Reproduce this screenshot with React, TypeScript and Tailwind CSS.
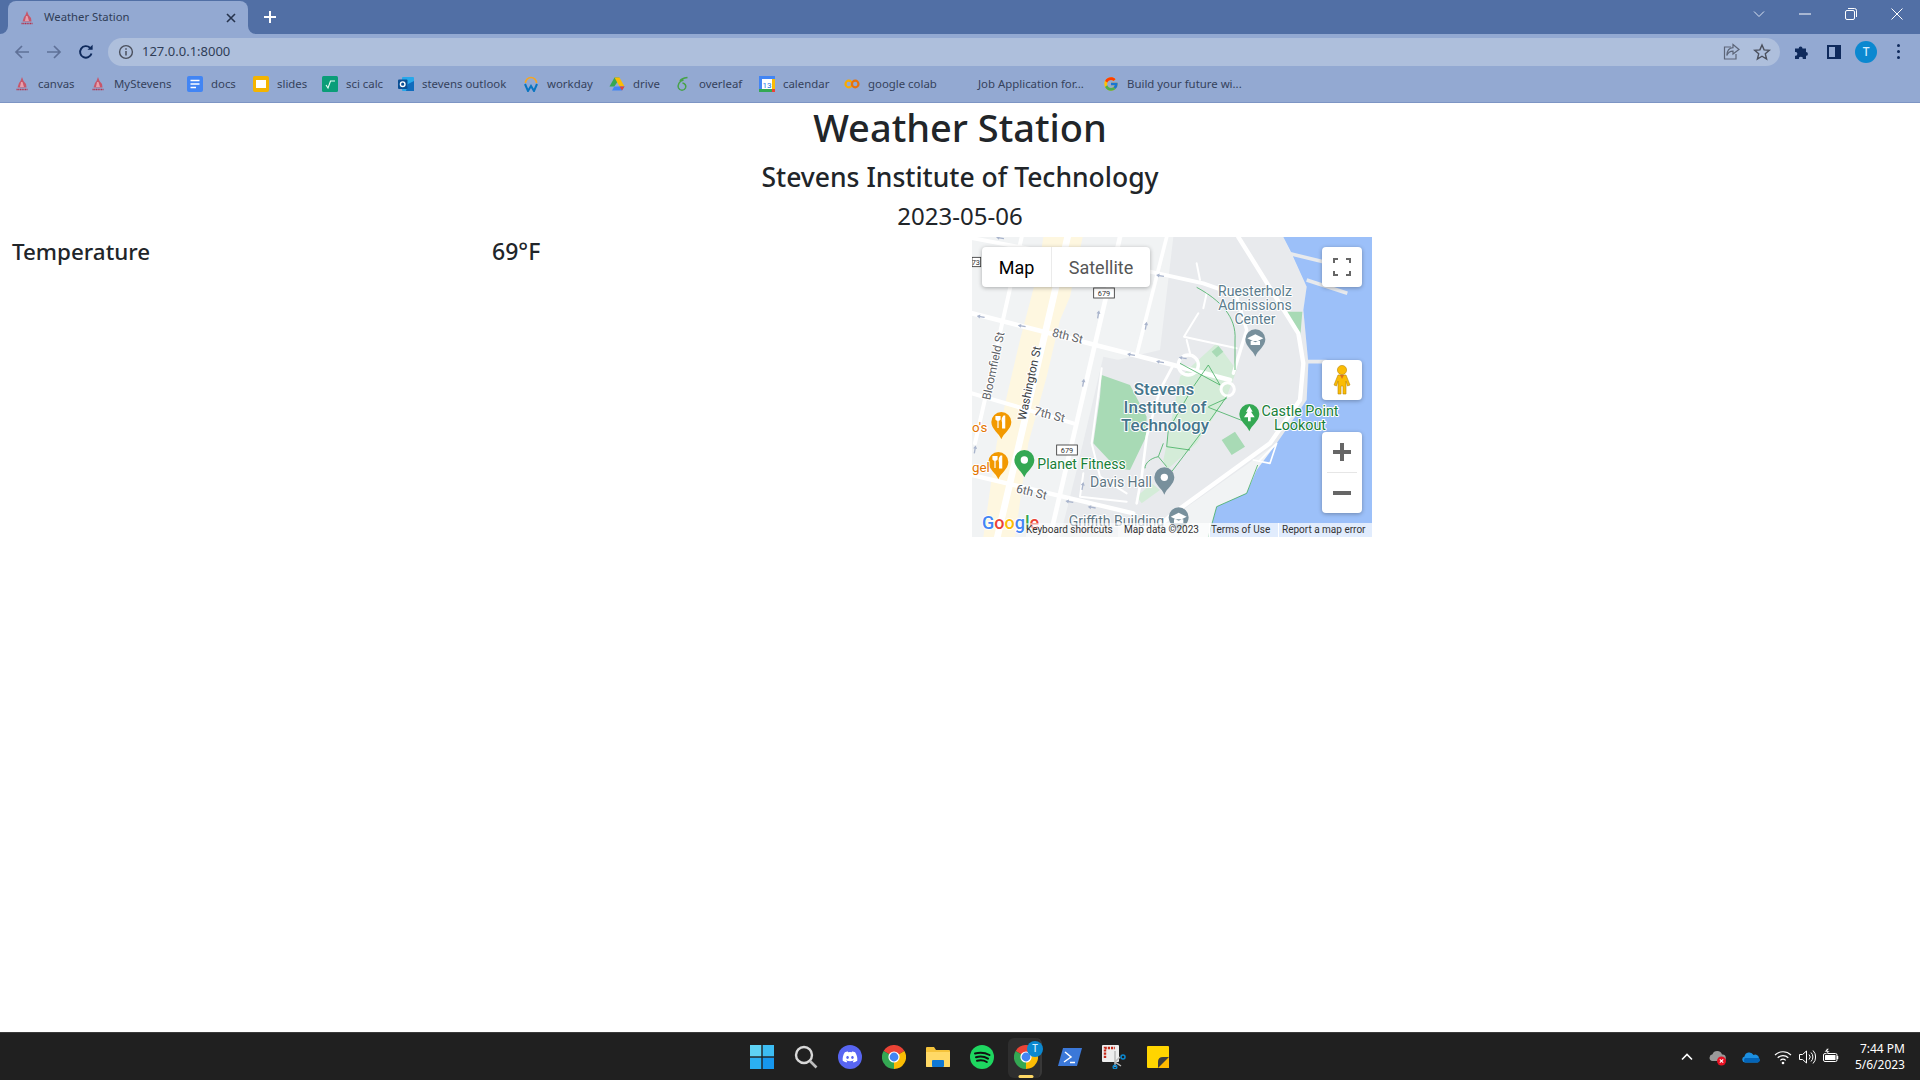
import React from 'react';
import { FaDiscord } from 'react-icons/fa';
import { FcGoogle } from 'react-icons/fc';

const Chrome = ({ s = 24 }: { s?: number }) => (
  <svg width={s} height={s} viewBox="0 0 24 24">
    <path d="M12 12 L1.6 6 A12 12 0 0 1 22.4 6 Z" fill="#ea4335" />
    <path d="M12 12 L22.4 6 A12 12 0 0 1 12 24 Z" fill="#fbbc04" />
    <path d="M12 12 L12 24 A12 12 0 0 1 1.6 6 Z" fill="#34a853" />
    <circle cx="12" cy="12" r="5.6" fill="#fff" />
    <circle cx="12" cy="12" r="4.4" fill="#4285f4" />
  </svg>
);

const Stevens = () => (
  <svg width="16" height="16" viewBox="0 0 16 16">
    <path d="M8 1 L9.5 5 L12 8 L12.5 11.5 L3.5 11.5 L5 7 L6.5 5 Z" fill="#c8566a" />
    <path d="M7 6 L8.5 6 L10 11 L6 11 Z" fill="#e8a0ad" />
    <path d="M2.5 13.5 H13.5" stroke="#b5304a" strokeWidth="1.6" strokeDasharray="1.2 .5" />
  </svg>
);

const Docs = () => (
  <svg width="16" height="16" viewBox="0 0 16 16">
    <rect width="16" height="16" rx="2" fill="#4285f4" />
    <path d="M3.5 4.5H12.5M3.5 8H12.5M3.5 11.5H9" stroke="#fff" strokeWidth="1.6" />
  </svg>
);
const Slides = () => (
  <svg width="16" height="16" viewBox="0 0 16 16">
    <rect width="16" height="16" rx="2" fill="#f4b400" />
    <rect x="3" y="4" width="10" height="8" fill="#fff" />
  </svg>
);
const SciCalc = () => (
  <svg width="16" height="16" viewBox="0 0 16 16">
    <rect width="16" height="16" rx="1.5" fill="#0b9d78" />
    <path d="M4 9 L6 12 L8.5 5 H13" stroke="#e8fff5" strokeWidth="1.1" fill="none" />
  </svg>
);
const Outlook = () => (
  <svg width="16" height="16" viewBox="0 0 16 16">
    <rect x="4" y="1" width="12" height="14" rx="1" fill="#28a8ea" />
    <path d="M10 8 L16 5 V15 H8 Z" fill="#0f6cbd" />
    <rect x="0" y="3.5" width="9.5" height="9.5" rx="1" fill="#0a4f94" />
    <circle cx="4.7" cy="8.2" r="2.3" fill="none" stroke="#fff" strokeWidth="1.4" />
  </svg>
);
const Workday = () => (
  <svg width="16" height="16" viewBox="0 0 16 16">
    <path d="M2.5 7 A5.5 5.5 0 0 1 13.5 7" stroke="#f5a623" strokeWidth="1.6" fill="none" />
    <path d="M2 8 L5 15 L8 10 L11 15 L14 8" stroke="#0875c1" strokeWidth="2" fill="none" />
  </svg>
);
const Drive = () => (
  <svg width="16" height="16" viewBox="0 0 16 16">
    <path d="M5.5 1.5 H10.5 L8 6.5 L5.3 10.5 H0.5 Z" fill="#34a853" />
    <path d="M10.5 1.5 L15.5 10.5 H10.5 L5.5 1.5 Z" fill="#fbbc04" />
    <path d="M3 14.5 L5.3 10.5 H15.5 L13 14.5 Z" fill="#4285f4" />
    <path d="M10.5 10.5H15.5L13 14.5Z" fill="#ea4335" />
  </svg>
);
const Overleaf = () => (
  <svg width="16" height="16" viewBox="0 0 16 16">
    <path d="M12.5 1.5 C9 2 6 2.5 5 5 M8.5 4 C4 5 2.5 9 3.5 12 C5 15 9 15 10.5 12 C11.5 9.5 10 7.5 7.5 7" stroke="#46a247" strokeWidth="1.5" fill="none" />
  </svg>
);
const Calendar = () => (
  <svg width="16" height="16" viewBox="0 0 16 16">
    <rect width="16" height="16" fill="#fff" />
    <rect width="16" height="3" fill="#4285f4" />
    <rect width="3" height="16" fill="#4285f4" />
    <rect x="13" y="3" width="3" height="10" fill="#fbbc04" />
    <rect y="13" width="13" height="3" fill="#34a853" />
    <rect x="13" y="13" width="3" height="3" fill="#ea4335" />
    <text x="8" y="11.5" textAnchor="middle" fontSize="8" fontFamily="Roboto, sans-serif" fill="#1a73e8">13</text>
  </svg>
);
const Colab = () => (
  <svg width="16" height="16" viewBox="0 0 16 16">
    <circle cx="4.8" cy="8" r="3.3" fill="none" stroke="#f9ab00" strokeWidth="2.2" />
    <circle cx="11.2" cy="8" r="3.3" fill="none" stroke="#e8710a" strokeWidth="2.2" />
  </svg>
);

const bookmarks: { icon: React.ReactNode; label: string; w: string }[] = [
  { icon: <Stevens />, label: 'canvas', w: 'w-[36px]' },
  { icon: <Stevens />, label: 'MyStevens', w: 'w-[57px]' },
  { icon: <Docs />, label: 'docs', w: 'w-[26px]' },
  { icon: <Slides />, label: 'slides', w: 'w-[29px]' },
  { icon: <SciCalc />, label: 'sci calc', w: 'w-[36px]' },
  { icon: <Outlook />, label: 'stevens outlook', w: 'w-[85px]' },
  { icon: <Workday />, label: 'workday', w: 'w-[46px]' },
  { icon: <Drive />, label: 'drive', w: 'w-[26px]' },
  { icon: <Overleaf />, label: 'overleaf', w: 'w-[44px]' },
  { icon: <Calendar />, label: 'calendar', w: 'w-[45px]' },
  { icon: <Colab />, label: 'google colab', w: 'w-[70px]' },
  { icon: <span className="block w-4 h-4" />, label: 'Job Application for...', w: 'w-[109px]' },
  { icon: <FcGoogle size={16} />, label: 'Build your future wi...', w: 'w-[113px]' },
];

const TitleBar = () => (
  <div className="flex items-end h-[34px] bg-[#516fa5]">
    <div className="relative ml-2 w-[240px] h-[33px] flex items-center bg-[#93a9d2] rounded-t-lg pl-[11px] pr-[9px]">
      <svg className="absolute -left-2 bottom-0" width="8" height="8" viewBox="0 0 8 8"><path d="M8 0 V8 H0 A8 8 0 0 0 8 0 Z" fill="#93a9d2" /></svg>
      <svg className="absolute -right-2 bottom-0" width="8" height="8" viewBox="0 0 8 8"><path d="M0 0 V8 H8 A8 8 0 0 1 0 0 Z" fill="#93a9d2" /></svg>
      <Stevens />
      <span className="ml-[9px] text-[11.3px] text-[#2f3d57] whitespace-nowrap">Weather Station</span>
      <svg className="ml-auto" width="16" height="16" viewBox="0 0 16 16"><path d="M4 4L12 12M12 4L4 12" stroke="#26334d" strokeWidth="1.6" /></svg>
    </div>
    <div className="ml-[10px] w-6 h-[34px] flex items-center justify-center">
      <svg width="16" height="16" viewBox="0 0 16 16"><path d="M8 2V14M2 8H14" stroke="#fff" strokeWidth="2" /></svg>
    </div>
    <div className="ml-auto flex h-[34px] items-center -translate-y-[3px]">
      <div className="w-[46px] flex justify-center"><svg width="12" height="8" viewBox="0 0 12 8"><path d="M1 1.5L6 6.5L11 1.5" stroke="#dbe3f1" fill="none" /></svg></div>
      <div className="w-[46px] flex justify-center"><svg width="12" height="2" viewBox="0 0 12 2"><path d="M0 1H12" stroke="#fff" /></svg></div>
      <div className="w-[46px] flex justify-center"><svg width="12" height="12" viewBox="0 0 12 12"><rect x=".5" y="2.5" width="9" height="9" rx="1.5" stroke="#fff" fill="none" /><path d="M3 .5H9.5A2 2 0 0 1 11.5 2.5V9" stroke="#fff" fill="none" /></svg></div>
      <div className="w-[46px] flex justify-center"><svg width="12" height="12" viewBox="0 0 12 12"><path d="M.5 .5L11.5 11.5M11.5 .5L.5 11.5" stroke="#fff" /></svg></div>
    </div>
  </div>
);

const Toolbar = () => (
  <div className="flex items-center h-[35px] bg-[#93a9d2]">
    <div className="flex gap-2 pl-[10px]">
      <div className="w-6 h-6 flex items-center justify-center"><svg width="16" height="16" viewBox="0 0 16 16"><path d="M15 8H2M8 2L2 8L8 14" stroke="#5f7198" strokeWidth="1.7" fill="none" /></svg></div>
      <div className="w-6 h-6 flex items-center justify-center"><svg width="16" height="16" viewBox="0 0 16 16"><path d="M1 8H14M8 2L14 8L8 14" stroke="#5f7198" strokeWidth="1.7" fill="none" /></svg></div>
      <div className="w-6 h-6 flex items-center justify-center"><svg width="16" height="16" viewBox="0 0 16 16"><path d="M13.5 9.5A5.8 5.8 0 1 1 12 3.8" stroke="#0f2a5c" strokeWidth="1.9" fill="none" /><path d="M9.5 5.8H14.6V.7Z" fill="#0f2a5c" /></svg></div>
    </div>
    <div className="ml-[10px] flex-1 h-[28px] rounded-full bg-[#aebfdc] flex items-center pl-[10px] pr-[9px]">
      <svg width="16" height="16" viewBox="0 0 16 16"><circle cx="8" cy="8" r="6.4" stroke="#4a4f5c" strokeWidth="1.4" fill="none" /><path d="M8 7V11.5M8 4.3V5.8" stroke="#4a4f5c" strokeWidth="1.5" /></svg>
      <span className="ml-2 text-[13px] text-[#2f3d57] whitespace-nowrap">127.0.0.1:8000</span>
      <svg className="ml-auto" width="18" height="18" viewBox="0 0 18 18"><path d="M9 4H2.5V16H14V11" stroke="#5c6578" strokeWidth="1.2" fill="none" /><path d="M11 1.5L17 6.5L11 11V8.2C8 8.2 6 9.5 4.8 12.5C5 8 7 4.9 11 4.6Z" stroke="#5c6578" strokeWidth="1.2" fill="none" /></svg>
      <svg className="ml-[13px]" width="18" height="18" viewBox="0 0 18 18"><path d="M9 2L11.1 6.9L16.3 7.3L12.3 10.8L13.6 16L9 13.2L4.4 16L5.7 10.8L1.7 7.3L6.9 6.9Z" stroke="#4a4f5c" strokeWidth="1.4" fill="none" /></svg>
    </div>
    <div className="flex gap-2 ml-[10px] pr-[10px]">
      <div className="w-6 h-6 flex items-center justify-center"><svg width="16" height="16" viewBox="0 0 16 16"><path d="M1 4.5H4.7A1.9 1.9 0 1 1 8.5 4.5H12V8A1.9 1.9 0 1 1 12 11.8V15H8.7A1.9 1.9 0 1 0 5 15H1V11.7A1.9 1.9 0 1 0 1 8Z" fill="#0f2a5c" /></svg></div>
      <div className="w-6 h-6 flex items-center justify-center"><svg width="14" height="14" viewBox="0 0 14 14"><rect x="1" y="1" width="12" height="12" stroke="#0f2a5c" strokeWidth="2" fill="none" /><rect x="8" y="1" width="5" height="12" fill="#0f2a5c" /></svg></div>
      <div className="w-6 h-6 flex items-center justify-center"><span className="w-[22px] h-[22px] rounded-full bg-[#0b88d0] flex items-center justify-center text-[12px] font-medium text-[#d6eeff]">T</span></div>
      <div className="w-6 h-6 flex flex-col items-center justify-center gap-[3px]">
        <span className="w-[3px] h-[3px] rounded-full bg-[#0f2a5c]" />
        <span className="w-[3px] h-[3px] rounded-full bg-[#0f2a5c]" />
        <span className="w-[3px] h-[3px] rounded-full bg-[#0f2a5c]" />
      </div>
    </div>
  </div>
);

const BookmarkBar = () => (
  <div className="flex items-center gap-4 h-[34px] pl-[14px] pb-[3px] bg-[#93a9d2] border-b border-[#7d95c4]">
    {bookmarks.map((b, i) => (
      <div key={i} className="flex items-center gap-2">
        {b.icon}
        <span className={`${b.w} text-[11.4px] leading-none text-[#35425c] whitespace-nowrap`}>{b.label}</span>
      </div>
    ))}
  </div>
);

const pin = (cx: number, cy: number) =>
  `M${cx} ${cy + 52} C${cx - 6} ${cy + 34} ${cx - 30} ${cy + 22} ${cx - 30} ${cy} A30 30 0 1 1 ${cx + 30} ${cy} C${cx + 30} ${cy + 22} ${cx + 6} ${cy + 34} ${cx} ${cy + 52}Z`;

const arrow = (x: number, y: number, a: number, k: number) => (
  <path key={k} transform={`translate(${x} ${y}) rotate(${a})`} d="M-12 0 L-2 -6 V-2 H12 V2 H-2 V6Z" fill="#a9b4cc" />
);

const Label = ({ x, y, size, fill, weight = 400, rot, children, anchor = 'middle' }: { x: number; y: number; size: number; fill: string; weight?: number; rot?: number; children: React.ReactNode; anchor?: 'middle' | 'start' }) => (
  <text
    x={x}
    y={y}
    fontSize={size}
    fill={fill}
    fontWeight={weight}
    textAnchor={anchor}
    fontFamily="Roboto, sans-serif"
    stroke="#fff"
    strokeWidth="6"
    paintOrder="stroke"
    strokeLinejoin="round"
    transform={rot !== undefined ? `rotate(${rot} ${x} ${y})` : undefined}
  >
    {children}
  </text>
);

const Shield = ({ x, y }: { x: number; y: number }) => (
  <g>
    <rect x={x} y={y} width="62" height="30" fill="#fff" stroke="#333" strokeWidth="2.5" />
    <text x={x + 31} y={y + 23} textAnchor="middle" fontSize="22" fontFamily="Roboto, sans-serif" fill="#333">679</text>
  </g>
);

const MapArt = () => (
  <svg className="block" width="400" height="300" viewBox="36 21 1200 900">
    <rect x="36" y="21" width="1200" height="900" fill="#f1f3f4" />
    <path d="M640 21 H970 L1040 170 L1030 240 L1045 400 L1040 510 L950 640 L640 860 L500 921 H300 L430 400 L600 360 Z" fill="#e8eaed" />
    <path d="M430 380 L620 420 L540 720 L350 720 Z" fill="#e8eaed" />
    <path d="M250 21 H368 L330 200 L300 270 L260 440 L205 640 L165 921 H70 L110 640 L140 500 L180 330 L235 120Z" fill="#fef7e0" />
    <path d="M970 21 L990 60 L1040 170 L1030 240 L1045 400 L1040 510 L950 640 L890 720 L860 790 L770 830 L745 921 H1236 V21Z" fill="#9cc0f9" />
    <path d="M985 70L1130 105M1040 150L1162 190M1040 395H1100" stroke="#e8eaed" strokeWidth="11" />
    <path d="M425 435 L510 465 L560 560 L558 620 L510 720 L470 715 L400 640 L420 500Z" fill="#a8dab5" />
    <path d="M770 340 L830 420 L800 500 L710 640 L620 720 L610 690 L625 620 L660 440Z" fill="#d4ecd8" />
    <path d="M575 760 L600 780 L545 820 L530 800Z" fill="#d4ecd8" />
    <path d="M785 630 L825 605 L855 650 L815 675Z M975 245 L1027 245 L1020 330Z M755 365 L775 348 L790 365 L770 382Z" fill="#a8dab5" />
    <g stroke="#fff" fill="none" strokeLinecap="round" strokeLinejoin="round">
      <path d="M330 -10 L110 930" strokeWidth="20" />
      <path d="M185 21 L45 640" strokeWidth="12" />
      <path d="M480 21 L270 921" strokeWidth="14" />
      <path d="M620 21 L530 375" strokeWidth="11" />
      <path d="M36 250 L640 405 L810 450" strokeWidth="14" />
      <path d="M40 25 L570 125 L730 160 L815 190" strokeWidth="12" />
      <path d="M36 490 L340 580" strokeWidth="12" />
      <path d="M36 735 L520 850" strokeWidth="13" />
      <path d="M835 21 L1015 310 L1030 400 L1020 510 L930 640 L640 850 L560 921" strokeWidth="13" />
      <path d="M830 200 L860 300 L820 430" strokeWidth="10" />
      <path d="M710 100 L720 150 M740 190 L730 235 M715 250 L672 320 L830 355 M680 330 L690 370" strokeWidth="6" />
      <path d="M640 405 L600 480 L560 620 L545 740 L530 820" strokeWidth="8" />
      <path d="M425 415 L395 640 L420 740 L500 790 M370 730 L360 800 L500 815" strokeWidth="6" />
      <path d="M900 690 L950 640 L930 700 L880 690" strokeWidth="5" />
      <circle cx="685" cy="405" r="30" strokeWidth="10" />
      <circle cx="803" cy="478" r="20" strokeWidth="9" />
    </g>
    <g stroke="#34a853" strokeWidth="2.2" fill="none">
      <path d="M710 172 C780 210 830 260 825 330 L825 420" />
      <path d="M745 405 L700 470 L625 600 L620 650 L690 660 M660 400 L780 465 M745 405 L780 465 M800 500 L715 620 L635 725 M800 505 L745 530 M745 532 L855 575 M595 680 L620 710 M610 640 L595 680 C570 685 555 700 555 715" />
      <path d="M893 705 L860 790 L770 830 L745 921" />
    </g>
    {[[62, 260, 10], [185, 288, 10], [513, 374, 10], [600, 396, 10], [668, 384, 10], [120, 24, 10], [600, 137, 10], [45, 658, 100], [370, 458, 100], [558, 287, 100], [415, 253, 100], [368, 768, 100], [328, 815, 10], [395, 832, 10]].map((a, i) => arrow(a[0], a[1], a[2], i))}
    <rect x="36" y="82" width="26" height="28" fill="#fff" stroke="#333" strokeWidth="2.5" />
    <text x="60" y="106" textAnchor="end" fontSize="22" fontFamily="Roboto, sans-serif" fill="#333">73</text>
    <Shield x={401} y={174} />
    <Shield x={290} y={645} />
    <Label x={320} y={330} size={36} fill="#5f6368" rot={14}>8th St</Label>
    <Label x={266} y={566} size={36} fill="#5f6368" rot={14}>7th St</Label>
    <Label x={212} y={798} size={36} fill="#5f6368" rot={14}>6th St</Label>
    <Label x={112} y={410} size={35} fill="#5f6368" rot={-78}>Bloomfield St</Label>
    <Label x={220} y={462} size={35} fill="#3c4043" rot={-78}>Washington St</Label>
    <path d={pin(886, 328)} fill="#78909c" />
    <path d="M886 313 L910 325 L886 337 L862 325Z M872 333 V345 H900 V333" fill="#fff" />
    <path d={pin(124, 576)} fill="#f29900" />
    <path d="M114 558 V578 M108 558 V568 Q114 574 120 568 V558 M114 578 V594 M132 558 Q124 566 128 578 V594 H134 V558Z" stroke="#fff" strokeWidth="3.5" fill="#fff" />
    <path d={pin(115, 696)} fill="#f29900" />
    <path d="M105 678 V698 M99 678 V688 Q105 694 111 688 V678 M105 698 V714 M123 678 Q115 686 119 698 V714 H125 V678Z" stroke="#fff" strokeWidth="3.5" fill="#fff" />
    <path d={pin(193, 690)} fill="#34a853" />
    <circle cx="193" cy="690" r="11" fill="#fff" />
    <path d={pin(613, 742)} fill="#78909c" />
    <circle cx="613" cy="742" r="11" fill="#fff" />
    <path d={pin(868, 552)} fill="#34a853" />
    <path d="M868 528 L878 545 H873 L884 562 H872 V574 H864 V562 H852 L863 545 H858Z" fill="#fff" />
    <path d={pin(656, 862)} fill="#78909c" />
    <path d="M656 848 L680 860 L656 872 L632 860Z M642 868 V880 H670 V868" fill="#fff" />
    <Label x={885} y={197} size={42} fill="#5b7c8d">Ruesterholz</Label>
    <Label x={885} y={239} size={42} fill="#5b7c8d">Admissions</Label>
    <Label x={885} y={281} size={42} fill="#5b7c8d">Center</Label>
    <Label x={612} y={494} size={51} fill="#45758c" weight={500}>Stevens</Label>
    <Label x={615} y={548} size={51} fill="#45758c" weight={500}>Institute of</Label>
    <Label x={615} y={603} size={51} fill="#45758c" weight={500}>Technology</Label>
    <Label x={1020} y={558} size={43} fill="#188038">Castle Point</Label>
    <Label x={1020} y={600} size={43} fill="#188038">Lookout</Label>
    <Label x={232} y={716} size={42} fill="#188038" anchor="start">Planet Fitness</Label>
    <Label x={390} y={770} size={42} fill="#5f7785" anchor="start">Davis Hall</Label>
    <Label x={326} y={888} size={42} fill="#5f7785" anchor="start">Griffith Building</Label>
    <Label x={36} y={605} size={40} fill="#e37400" anchor="start">o's</Label>
    <Label x={36} y={726} size={40} fill="#e37400" anchor="start">gel</Label>
    <text x="66" y="896" fontSize="54" fontFamily="Roboto, sans-serif" fontWeight="500" stroke="#fff" strokeWidth="5" paintOrder="stroke">
      <tspan fill="#4285f4">G</tspan><tspan fill="#ea4335">o</tspan><tspan fill="#fbbc04">o</tspan><tspan fill="#4285f4">g</tspan><tspan fill="#34a853">l</tspan><tspan fill="#ea4335">e</tspan>
    </text>
  </svg>
);

const GoogleMap = () => (
  <div className="relative w-[400px] h-[300px] overflow-hidden font-['Roboto',sans-serif]">
    <MapArt />
    <div className="absolute left-[10px] top-[10px] flex h-10 bg-white shadow-[0_1px_4px_rgba(0,0,0,0.3)] rounded-sm text-[18px]">
      <span className="w-[70px] flex items-center justify-center text-black border-r border-[#ebebeb]">Map</span>
      <span className="w-[98px] flex items-center justify-center text-[#565656]">Satellite</span>
    </div>
    <div className="absolute right-[10px] top-[10px] w-10 h-10 bg-white shadow-[0_1px_4px_rgba(0,0,0,0.3)] rounded-sm flex items-center justify-center">
      <svg width="18" height="18" viewBox="0 0 18 18"><path d="M1 5V1H5M13 1H17V5M17 13V17H13M5 17H1V13" stroke="#666" strokeWidth="2" fill="none" /></svg>
    </div>
    <div className="absolute right-[10px] top-[123px] w-10 h-10 bg-white shadow-[0_1px_4px_rgba(0,0,0,0.3)] rounded-sm flex items-center justify-center">
      <svg width="18" height="30" viewBox="0 0 18 30">
        <circle cx="9" cy="5" r="4.6" fill="#fbbc04" stroke="#b8860b" strokeWidth=".6" />
        <path d="M5 10 H13 L17 20 L14.5 21 L13 16 V29 H10 V21 H8 V29 H5 V16 L3.5 21 L1 20Z" fill="#fbbc04" stroke="#b8860b" strokeWidth=".6" />
        <path d="M7 10 L9 14 L11 10Z" fill="#d9701e" />
      </svg>
    </div>
    <div className="absolute right-[10px] top-[195px] w-10 h-[81px] bg-white shadow-[0_1px_4px_rgba(0,0,0,0.3)] rounded-sm flex flex-col items-center">
      <div className="h-10 flex items-center justify-center">
        <svg width="18" height="18" viewBox="0 0 18 18"><path d="M9 0V18M0 9H18" stroke="#666" strokeWidth="4" /></svg>
      </div>
      <div className="w-[30px] h-px bg-[#e6e6e6]" />
      <div className="h-10 flex items-center justify-center">
        <svg width="18" height="18" viewBox="0 0 18 18"><path d="M0 9H18" stroke="#666" strokeWidth="4" /></svg>
      </div>
    </div>
    <div className="absolute left-[54px] right-0 bottom-0 h-[14px] flex items-center text-[10px] leading-none text-[#333] whitespace-nowrap">
      <span className="w-[92px] h-full flex items-center bg-white/50">Keyboard shortcuts</span>
      <span className="w-[91px] h-full flex items-center pl-[6px] bg-white/70">Map data ©2023</span>
      <span className="w-[69px] h-full flex items-center pl-[1px] bg-white/70 border-l border-white">Terms of Use</span>
      <span className="flex-1 h-full flex items-center pl-[3px] bg-white/70 border-l border-white">Report a map error</span>
    </div>
  </div>
);

const Dot = () => <span className="absolute left-1/2 -translate-x-1/2 top-[39px] w-[6px] h-[3px] rounded-sm bg-[#8a8a8a]" />;

const Task = ({ children, dot }: { children: React.ReactNode; dot?: boolean }) => (
  <div className="relative w-6 h-6 flex items-center justify-center">
    {children}
    {dot && <Dot />}
  </div>
);

const Taskbar = () => (
  <div className="flex items-center h-[48px] bg-[#202020] border-t border-[#3a3a3a] text-white">
    <div className="flex-1" />
    <div className="flex items-center gap-5">
      <Task>
        <svg width="24" height="24" viewBox="0 0 24 24">
          <rect x="0" y="0" width="11.3" height="11.3" fill="#5fd3f5" />
          <rect x="12.7" y="0" width="11.3" height="11.3" fill="#3cbdf3" />
          <rect x="0" y="12.7" width="11.3" height="11.3" fill="#2bb0f2" />
          <rect x="12.7" y="12.7" width="11.3" height="11.3" fill="#1697ee" />
        </svg>
      </Task>
      <Task>
        <svg width="24" height="24" viewBox="0 0 24 24"><circle cx="10" cy="10" r="8" stroke="#d8d8d8" strokeWidth="2.4" fill="none" /><path d="M16 16L22.5 22.5" stroke="#bdbdbd" strokeWidth="2.6" /></svg>
      </Task>
      <Task>
        <span className="w-6 h-6 rounded-full bg-[#5865f2] flex items-center justify-center"><FaDiscord size={16} color="#fff" /></span>
      </Task>
      <Task><Chrome /></Task>
      <Task dot>
        <svg width="24" height="24" viewBox="0 0 24 24">
          <path d="M0 3A1 1 0 0 1 1 2H8L10 5H23A1 1 0 0 1 24 6V21A1 1 0 0 1 23 22H1A1 1 0 0 1 0 21Z" fill="#f5c33b" />
          <path d="M0 7H24V21A1 1 0 0 1 23 22H1A1 1 0 0 1 0 21Z" fill="#ffd966" />
          <rect x="6" y="15" width="12" height="7" rx="1" fill="#0f78d4" />
        </svg>
      </Task>
      <Task dot>
        <svg width="24" height="24" viewBox="0 0 24 24">
          <circle cx="12" cy="12" r="12" fill="#1ed760" />
          <path d="M5 8.5C10 7 15 7.5 19.5 10M6 12.2C10 11 14.5 11.5 18 13.6M7 15.8C10.5 15 14 15.3 16.8 17" stroke="#111" strokeWidth="2" strokeLinecap="round" fill="none" />
        </svg>
      </Task>
      <div className="relative w-6 h-6 flex items-center justify-center">
        <span className="absolute -left-[6px] -right-[4px] -top-[7px] h-10 rounded-md bg-[#2e2e2e] border-r-2 border-[#383838]" />
        <span className="relative"><Chrome /></span>
        <span className="absolute -top-[4px] left-[13px] w-4 h-4 rounded-full bg-[#0b88d0] flex items-center justify-center text-[10px] font-medium text-[#d6eeff]">T</span>
        <span className="absolute left-1/2 -translate-x-1/2 top-[30px] w-[15px] h-[3px] rounded-sm bg-[#ffd966]" />
      </div>
      <Task dot>
        <svg width="24" height="24" viewBox="0 0 24 24">
          <path d="M5 3H24L19 21H0Z" fill="#3b78d8" />
          <path d="M7 7L13 12L6 17M12 17.5H17" stroke="#fff" strokeWidth="1.5" fill="none" />
        </svg>
      </Task>
      <Task dot>
        <svg width="24" height="24" viewBox="0 0 24 24">
          <rect x="0" y="0" width="17" height="17" rx="1" fill="#eee" />
          <path d="M3 13V3H13" stroke="#c42b1c" strokeWidth="2.4" strokeDasharray="2.2 1" fill="none" />
          <path d="M13 6V17L19 21M18 12L13 17V22" stroke="#bbb" strokeWidth="1.5" fill="none" />
          <circle cx="21" cy="12" r="2" fill="none" stroke="#0b88d0" strokeWidth="1.5" />
          <circle cx="13" cy="22" r="1.8" fill="none" stroke="#0b88d0" strokeWidth="1.5" />
        </svg>
      </Task>
      <Task dot>
        <svg width="24" height="24" viewBox="0 0 24 24">
          <rect width="22" height="22" x="1" y="1" rx="1" fill="#ffd500" />
          <path d="M23 11V23H11Z" fill="#ffb900" />
          <path d="M12 23 L12 17 Q12 12 17 12 L23 12Z" fill="#3d3d3d" />
        </svg>
      </Task>
    </div>
    <div className="flex-1 flex items-center justify-end">
      <div className="flex items-center mr-[15px]">
        <svg width="18" height="18" viewBox="0 0 18 18"><path d="M4 11.5L9 6.5L14 11.5" stroke="#fff" strokeWidth="1.6" fill="none" /></svg>
        <svg className="ml-[13px]" width="18" height="18" viewBox="0 0 18 18">
          <path d="M3 13A3.5 3.5 0 0 1 3.5 6.2A5 5 0 0 1 13 6.5A3 3 0 0 1 14 13Z" fill="#9a9a9a" />
          <circle cx="12.5" cy="13" r="4.5" fill="#e81123" />
          <path d="M10.8 11.3L14.2 14.7M14.2 11.3L10.8 14.7" stroke="#fff" strokeWidth="1.1" />
        </svg>
        <svg className="ml-[15px]" width="18" height="18" viewBox="0 0 18 18">
          <path d="M3 14.5A3 3 0 0 1 2.5 8.6A4.8 4.8 0 0 1 11.5 7A3.8 3.8 0 0 1 17 10.5A2.5 2.5 0 0 1 15.5 14.5Z" fill="#1c8fe0" />
          <path d="M3 14.5A3 3 0 0 1 3 10H16.8A2.5 2.5 0 0 1 15.5 14.5Z" fill="#0364b8" />
        </svg>
        <svg className="ml-[14px]" width="18" height="18" viewBox="0 0 18 18">
          <path d="M1 7A11.5 11.5 0 0 1 17 7M3.7 9.8A7.7 7.7 0 0 1 14.3 9.8M6.3 12.4A4 4 0 0 1 11.7 12.4" stroke="#fff" strokeWidth="1.2" fill="none" />
          <circle cx="9" cy="15" r="1.3" fill="#fff" />
        </svg>
        <svg className="ml-[6px]" width="18" height="18" viewBox="0 0 18 18">
          <path d="M1.5 6.5H4.5L8.5 3V15L4.5 11.5H1.5Z" stroke="#fff" fill="none" />
          <path d="M11 6.5A3.5 3.5 0 0 1 11 11.5M13 4.5A6.3 6.3 0 0 1 13 13.5M15 2.5A9.3 9.3 0 0 1 15 15.5" stroke="#fff" fill="none" />
        </svg>
        <svg className="ml-[6px]" width="18" height="18" viewBox="0 0 18 18">
          <rect x="1.5" y="5.5" width="13.5" height="8" rx="1.5" stroke="#fff" fill="none" />
          <rect x="3" y="7" width="10.5" height="5" fill="#fff" />
          <path d="M15.5 8V11" stroke="#fff" strokeWidth="1.5" />
          <path d="M5 0.5L2.5 4H5L3.5 7L8 3H5.5L7 .5Z" fill="#fff" stroke="#202020" strokeWidth=".5" />
        </svg>
        <div className="ml-[15px] flex flex-col items-end text-[12px] leading-4 text-white font-['Noto_Sans',sans-serif]">
          <span>7:44 PM</span>
          <span>5/6/2023</span>
        </div>
      </div>
    </div>
  </div>
);

export default function App() {
  return (
    <div className="w-[1920px] h-[1080px] flex flex-col overflow-hidden bg-white font-['Noto_Sans',sans-serif]">
      <TitleBar />
      <Toolbar />
      <BookmarkBar />
      <main className="flex-1 text-[#212529]">
        <h1 className="text-center text-[38px] leading-[48px] font-medium">Weather Station</h1>
        <h2 className="text-center text-[26.5px] leading-[38px] font-medium mt-[7px]">Stevens Institute of Technology</h2>
        <h3 className="text-center text-[24px] leading-[29px] mt-[5px]">2023-05-06</h3>
        <div className="grid grid-cols-[480px_480px_480px] mt-[7px]">
          <div className="px-3 text-[22.4px] leading-[29px] font-medium">Temperature</div>
          <div className="px-3 text-[23px] leading-[29px] font-medium">69°F</div>
          <div className="px-3"><GoogleMap /></div>
        </div>
      </main>
      <Taskbar />
    </div>
  );
}
